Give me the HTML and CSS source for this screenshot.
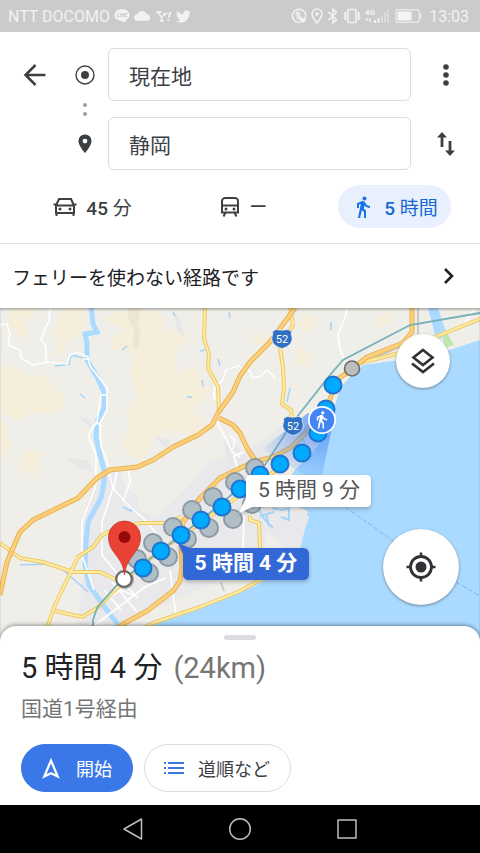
FILE: index.html
```html
<!DOCTYPE html>
<html lang="ja">
	<head>
		<meta charset="utf-8">
		<meta name="viewport" content="width=device-width, initial-scale=1">
		<title>経路 - 静岡</title>
		<link rel="stylesheet" href="styles.css">
	</head>
	<body>
		<div class="status">
			<span>NTT DOCOMO</span>
			<div class="status-icons">
				<svg width="16" height="16" viewBox="0 0 16 16"><path d="M8 1c4 0 7.500 2.500 7.500 6 0 3.500-4 6-6.500 8-.5.300-.8 0-.6-1v-1C4 13 .5 10.500.5 7 .5 3.500 4 1 8 1z" fill="#f2f2f2"/><text x="8" y="9" class="line-text">LINE</text></svg>
				<svg width="16" height="16" viewBox="0 0 24 24"><path d="M19 9.500C18.500 6.500 15.500 4.500 12 4.500c-3 0-5 1.500-6 4C2.500 9 0 11.500 0 15c0 2 1.500 4 4 4h16c2.500 0 4-2 4-4.500 0-3-2-5-5-5z" fill="#f2f2f2"/></svg>
				<svg width="18" height="16" viewBox="0 0 18 16"><path d="M2 4h6M3.500 4l4 5 4-3M9.500 5.500h4M7.500 9v3.500M5.500 13h4.500" fill="none" stroke="#f2f2f2" stroke-width="1.600"/><path d="M15 4h2.500l-2 6H14zM13.300 11.500h2V13h-2z" fill="#f2f2f2"/></svg>
				<svg width="15" height="15" viewBox="0 0 24 24"><path d="M23.953 4.570a10 10 0 01-2.825.775 4.958 4.958 0 002.163-2.723c-.951.555-2.005.959-3.127 1.184a4.920 4.920 0 00-8.384 4.482C7.690 8.095 4.067 6.130 1.640 3.162a4.822 4.822 0 00-.666 2.475c0 1.710.870 3.213 2.188 4.096a4.904 4.904 0 01-2.228-.616v.060a4.923 4.923 0 003.946 4.827 4.996 4.996 0 01-2.212.085 4.936 4.936 0 004.604 3.417 9.867 9.867 0 01-6.102 2.105c-.390 0-.779-.023-1.170-.067a13.995 13.995 0 007.557 2.209c9.053 0 13.998-7.496 13.998-13.985 0-.210 0-.420-.015-.630A9.935 9.935 0 0024 4.590z" fill="#f2f2f2"/></svg>
			</div>
			<div class="status-right">
				<svg width="16" height="16" viewBox="0 0 16 16" fill="none" stroke="#f2f2f2" stroke-width="1.500"><path d="M9 14.500A6.700 6.700 0 1 1 14.700 9"/><path d="M4.500 6.500L6.500 4.500V11M8.500 4.500V11l2-2"/><path d="M9 12.500c0-2 2-3 6-3 0 3-1 5-3.500 5-1.500 0-2.500-.8-2.500-2z" fill="#f2f2f2" stroke="none"/></svg>
				<svg width="14" height="16" viewBox="0 0 14 16" fill="none" stroke="#f2f2f2" stroke-width="1.500"><path d="M7 15C4 11 2 9 2 6a5 5 0 0 1 10 0c0 3-2 5-5 9z"/><circle cx="7" cy="6" r="1" fill="#f2f2f2"/></svg>
				<svg width="12" height="16" viewBox="0 0 12 16" fill="none" stroke="#f2f2f2" stroke-width="1.500"><path d="M1.500 4l8 7.500L6 15V1l3.500 3.500-8 7.500"/></svg>
				<svg width="20" height="16" viewBox="0 0 20 16" fill="none" stroke="#f2f2f2" stroke-width="1.600"><rect x="6" y="1.500" width="8" height="13" rx="1"/><path d="M3 3.500l1 1.500-1.500 1.500L4 8 2.500 9.500 4 11l-1 1.500M17 3.500L16 5l1.500 1.500L16 8l1.500 1.500L16 11l1 1.500"/></svg>
				<svg width="24" height="16" viewBox="0 0 24 16"><text x="0" y="7" class="net-text">4G</text><path d="M2 10v3M5 10v4" stroke="#f2f2f2" stroke-width="1.500"/><path d="M9 12h2v3H9zM12.500 10h2v5h-2z" fill="#f2f2f2"/><path d="M16 7h2v8h-2zM19 4h2v11h-2zM22 1h2v14h-2z" fill="#dcdcdc"/></svg>
				<svg class="battery" width="28" height="14" viewBox="0 0 28 14"><rect x=".8" y=".8" width="23.400" height="12.400" rx="1.500" fill="none" stroke="#e6e6e6" stroke-width="1.400"/><path d="M2.500 2.500h14v9h-14z" fill="#f4f4f4"/><path d="M25.500 4v6" stroke="#e6e6e6" stroke-width="2"/></svg>
				<span>13:03</span>
			</div>
		</div>

		<form class="directions">
			<div class="route">
				<button type="button" class="icon-btn" aria-label="戻る">
					<svg width="24" height="24" viewBox="0 0 24 24" fill="none" stroke="#3c4043" stroke-width="2.500"><path d="M22.500 12H3M12.500 2L2.500 12l10 10"/></svg>
				</button>
				<label class="marker" for="from" aria-label="出発地">
					<svg width="20" height="20" viewBox="0 0 20 20"><circle cx="10" cy="10" r="9" fill="none" stroke="#3c4043" stroke-width="1.400"/><circle cx="10" cy="10" r="4" fill="#3c4043"/></svg>
				</label>
				<input class="field" id="from" type="text" value="現在地">
				<button type="button" class="icon-btn" aria-label="メニュー">
					<svg width="24" height="24" viewBox="0 0 24 24" fill="#3c4043"><circle cx="12" cy="4" r="2.800"/><circle cx="12" cy="12" r="2.800"/><circle cx="12" cy="20" r="2.800"/></svg>
				</button>
				<div class="dots"><i></i><i></i></div>
				<label class="marker marker-to" for="to" aria-label="目的地">
					<svg width="14" height="20" viewBox="0 0 14 20"><path d="M7 .5A6.500 6.500 0 0 0 .4 7c0 4.500 6.600 12 6.600 12s6.600-7.500 6.600-12A6.500 6.500 0 0 0 7 .5zm0 9a2.400 2.400 0 1 1 0-4.800 2.400 2.400 0 0 1 0 4.800z" fill="#3c4043"/></svg>
				</label>
				<input class="field field-to" id="to" type="text" value="静岡">
				<button type="button" class="icon-btn swap" aria-label="入れ替え">
					<svg width="20" height="26" viewBox="0 0 20 26" fill="none" stroke="#3c4043" stroke-width="2.800"><path d="M6 16V4M14 10v12"/><path d="M6 1l5 5.500H1zM14 25l5-5.500H9z" fill="#3c4043" stroke="none"/></svg>
				</button>
			</div>
			<div class="modes">
				<button type="button" class="mode">
					<svg width="24" height="20" viewBox="0 0 24 20" fill="none" stroke="#3c4043" stroke-width="2"><path d="M3 8.500L6 2h12l3 6.500M3 8.500h18V16H3zM.5 7.500h3M20.500 7.500h3M3.500 16v3M20.500 16v3"/><g fill="#3c4043" stroke="none"><circle cx="7" cy="12" r="1.500"/><circle cx="17" cy="12" r="1.500"/></g></svg>
					<span><b>45</b> 分</span>
				</button>
				<button type="button" class="mode">
					<svg width="20" height="20" viewBox="0 0 20 20" fill="none" stroke="#3c4043" stroke-width="2"><path d="M2 15.500V4c0-2 2-3 3-3h10c1 0 3 1 3 3v11.500zM2 8.500h16M2 15.500h16M5.500 15.500l-2 4M14.500 15.500l2 4"/><g fill="#3c4043" stroke="none"><circle cx="6" cy="12" r="1.500"/><circle cx="14" cy="12" r="1.500"/></g></svg>
					<span class="dash">—</span>
				</button>
				<button type="button" class="mode mode-on">
					<svg width="24" height="24" viewBox="0 0 24 24"><path d="M13.500 5.500c1.100 0 2-.9 2-2s-.9-2-2-2-2 .9-2 2 .9 2 2 2zM9.800 8.900L7 23h2.100l1.800-8 2.100 2v6h2v-7.500l-2.100-2 .6-3C14.800 12 16.800 13 19 13v-2c-1.900 0-3.500-1-4.300-2.400l-1-1.600c-.4-.6-1-1-1.700-1-.3 0-.5.100-.8.100L6 8.300V13h2V9.600l1.800-.7" fill="#1a73e8"/></svg>
					<span><b>5</b> 時間</span>
				</button>
			</div>
		</form>

		<a class="notice" href="#">
			<span>フェリーを使わない経路です</span>
			<svg width="12" height="18" viewBox="0 0 12 18" fill="none" stroke="#202124" stroke-width="2.600"><path d="M2 2l7 7-7 7"/></svg>
		</a>

		<main class="map">
			<svg class="map-canvas" viewBox="0 308 480 334" preserveAspectRatio="xMidYMin slice">
				<defs>
					<radialGradient id="beam" gradientUnits="userSpaceOnUse" cx="322" cy="420" r="72">
						<stop offset="0" stop-color="#4285f4" stop-opacity=".75"/>
						<stop offset="1" stop-color="#4285f4" stop-opacity="0"/>
					</radialGradient>
					<filter id="shadow" x="-20%" y="-30%" width="140%" height="180%">
						<feDropShadow dx="0" dy="2" stdDeviation="2" flood-color="#000" flood-opacity=".25"/>
					</filter>
					<path id="shield" d="M-6-9.500Q0-8 6-9.500L9.500-7.500Q8.500-5 10-2C11 4 6 8 0 9.500-6 8-11 4-10-2-8.500-5-9.500-7.500-9.500-7.500z" fill="#2f6fc4" stroke="#fff" stroke-width=".6"/>
				</defs>

				<!-- land -->
				<path d="M0 308h480v334H0z" fill="#efeee9"/>
				<g fill="#f5eedb">
					<path d="M10 308h27l-3 8-11 4 5 10-5 10-8-9-6-6zM62 308h21l1 18-8 12-9 4-5 14-6-2 3-16-6-8zM104 318l18-8h33l7 6 4 17 14-8 10 13-14 12-1 25 20-10 6 15 10 8-10 16-9 4 14 16-13 14-18-9-21 8-5 14-8 10-13-7-6-12 8-13-3-20 11-12-8-22 5-22-10-6-12 4-2-14 14-6z"/>
					<path d="M0 366l18 2 9 9 14-3 14 12 9 10-2 13-16 4-16-1-11 10-19-10zM0 418l9 9-3 9 7 10-13 14zM26 450l18 3-7 12 1 14-9-6-12-4 4-9z"/>
					<path d="M252 336l8-4 7 9-12 4zM302 314l17 6-12 14-9-6zM298 348l13 6-3 14-14-6zM375 318l12-6 6 9-15 8z"/>
				</g>
				<path d="M127 308h14l-3 14 3 12-4 15-4-3 1-17-5-9z" fill="#ebe5d5"/>
				<path d="M75 642l9-72-4-48 16-44 22-10 8 20 16 9 34-14 36-21 40-14 24-17 14-18 16 5-10 30-20 28-18 60-30 40-90 40z" fill="#e9e9eb"/>
				<path d="M140 494l24-10 28-19 13 2-22 25-27 25-19-7z" fill="#efeee9"/>
				<path d="M172 308l9 14 4 17-7-7zM154 436l12 4 4-4-2 14zM224 440l16 8v20l-14-9zM64 458l24 2 5 12-15-4zM76 414l17 8-3 6z" fill="#e7e7e9"/>

				<!-- sea and rivers -->
				<path d="M480 340l-40 13-40 7-37 5-13 12-10 11-5 17-7 27-15 20-13 13-7 7-9 29 24 10-3 11-7 30-17 18-28 17-69 26-24 9-28 16h388z" fill="#aadaff"/>
				<path d="M250 502l30 3 10 8 14-1 5 5-4 12-5 20-16-1-8-10-10-7-2 20 2 12-30 14z" fill="#e9e9eb"/>
				<g fill="none" stroke="#a3d4fa" stroke-width="2">
					<path d="M259 510l6 10 8 8M260 516l14-4M266 514l3 12M272 508l10 2 7-2v12l-8-3"/>
					<path d="M55 366l14-2 2-9 12 3M20 565l26-1M64 571l14 12 10 9M123 507l8 4 2-3M122 350l5-4M80 394l5 4M200 351l5-1M187 397h5M202 380l1 7M218 359l2 7M173 312l2 4M229 312l1 6M331 322v8M290 388l-3 14M302 438l3 5" stroke-width="1.500"/>
				</g>
				<path d="M91 306l2 18 4 8-12 2 2 9v17l10 17 7 15v16l-7 14-1 16 4 17 4 15v12l-3 16-13 24-2 20-1 23 4 20 14 20 13 17 10 20" fill="none" stroke="#aadaff" stroke-width="5"/>
				<path d="M428 308h10l10 30h-12z" fill="#aadaff"/>
				<path d="M441 330l6 3 7 12-9 3z" fill="#bfe8b0"/>

				<!-- small roads -->
				<g fill="none" stroke="#fff" stroke-width="1.600">
					<path d="M0 325l7-1 3 10-2 11 12 5 1 8 12 7 14-3 20 2 3-9 7-3 11 5 2 9 17 22v22l-7 13 1 23 8 20"/>
					<path d="M50 308l-1 13-4 8-4 10 5 8v15M101 395h6M101 395l-4 27-9 13 8 20v30l-14 37v33l12 35M95 422l7 4M84 359h5"/>
					<path d="M108 468l5 20-11 34v33l18 22M113 488l12 14 18 16 16 18M128 465l2 17-7 20M117 470l-3 18M347 308l-2 10-7 16 2 16 4 8M240 368l9 2 4 8 8-2 6-6 9 9M240 365l-14 5-4 12-7 3-1 12 6 6-2 22 8 14 7 14 7 4M230 436l5 4-2 9M475 308l-12 18M238 470l-4-14 10-4M165 542l12 18M244 515l-1 34M170 570l6 45M80 620l40-30 16 6M104 590l17 20M112 582l25 30M128 588l10 10M95 625l50-38 20-9"/>
				</g>
				<path d="M418 308v31l-44 19M221 582l3 9M288 450l12-15 21-27" fill="none" stroke="#c9c9c9" stroke-width="2"/>

				<!-- trunk roads -->
				<g class="road-edge">
					<path d="M205 308l-1 30 5 17-1 13 10 19 1 24"/>
					<path d="M290 308l3 17-13 23 3 20 1 20-2 16 9 6 2 14"/>
					<path d="M0 543l20 15 23 4 30 10 27 0 17 8"/>
					<path d="M42 642l6-17 7-20 23-48 15-10 9-12 11-5 27-7h27l15-6"/>
					<path d="M55 611l27 6 15-9 20-20 26-24 38-28 40-27 40-29 25-16"/>
					<path d="M120 640l33-17 47-16 38-15 22-12M250 515v5l9 3 1 24 1 35"/>
					<path d="M360 363l36-9 44-19 40-16"/>
				</g>
				<g class="road-fill">
					<path d="M205 308l-1 30 5 17-1 13 10 19 1 24"/>
					<path d="M290 308l3 17-13 23 3 20 1 20-2 16 9 6 2 14"/>
					<path d="M0 543l20 15 23 4 30 10 27 0 17 8"/>
					<path d="M42 642l6-17 7-20 23-48 15-10 9-12 11-5 27-7h27l15-6"/>
					<path d="M55 611l27 6 15-9 20-20 26-24 38-28 40-27 40-29 25-16"/>
					<path d="M120 640l33-17 47-16 38-15 22-12M250 515v5l9 3 1 24 1 35"/>
					<path d="M360 363l36-9 44-19 40-16"/>
				</g>
				<g class="highway-edge">
					<path d="M0 595l7-33 13-30 13-12 45-22 19-20 13-8 27-3 16-7 20-13 25-12 14-10 6-12 15-21 7-16 10-14 20-20 25-34"/>
					<path d="M219 418l14 7 7 8 7 15 8 12"/>
					<path d="M412 308v24l-9 11-36 14-10 8-20 15-8 22-22 30-17 16-17 9-20 5-33 16-20 20-17 24-2 18 1 27-2 14-7 10-26 20-24 13-16 12"/>
				</g>
				<g class="highway-fill">
					<path d="M0 595l7-33 13-30 13-12 45-22 19-20 13-8 27-3 16-7 20-13 25-12 14-10 6-12 15-21 7-16 10-14 20-20 25-34"/>
					<path d="M219 418l14 7 7 8 7 15 8 12"/>
					<path d="M412 308v24l-9 11-36 14-10 8-20 15-8 22-22 30-17 16-17 9-20 5-33 16-20 20-17 24-2 18 1 27-2 14-7 10-26 20-24 13-16 12"/>
				</g>
				<path d="M480 313l-70 12-67 35-13 15-37 47-28 43-44 39-42 33-40 30-22 18-20 23-4 12v22" fill="none" stroke="#75b1b6" stroke-width="1.800"/>
				<path d="M345 507l50 35M456 582l24 14" fill="none" stroke="#85b5e5" stroke-dasharray="5 2"/>

				<use href="#shield" x="282" y="339"/>
				<text x="282" y="343" class="shield-text">52</text>
				<path d="M322 420l-14-7-46 36 58 36 12-57z" fill="url(#beam)"/>
				<use href="#shield" x="293" y="426"/>
				<text x="293" y="430" class="shield-text">52</text>

				<!-- alternative route -->
				<g class="stop-alt">
					<circle cx="255" cy="468" r="9"/><circle cx="235" cy="482" r="9"/><circle cx="213" cy="497" r="9"/><circle cx="192" cy="510" r="9"/>
					<circle cx="173" cy="527" r="9"/><circle cx="153" cy="543" r="9"/><circle cx="137" cy="559" r="9"/>
					<circle cx="252" cy="504" r="9"/><circle cx="233" cy="519" r="9"/><circle cx="209" cy="528" r="9"/><circle cx="187" cy="539" r="9"/>
					<circle cx="168" cy="557" r="9"/><circle cx="149" cy="573" r="9"/>
				</g>
				<!-- walking route -->
				<g class="stop">
					<circle cx="333" cy="385" r="8.500"/><circle cx="326" cy="409" r="8.500"/><circle cx="318" cy="433" r="8.500"/><circle cx="302" cy="453" r="8.500"/>
					<circle cx="280" cy="464" r="8.500"/><circle cx="260" cy="475" r="8.500"/><circle cx="240" cy="489" r="8.500"/><circle cx="222" cy="507" r="8.500"/>
					<circle cx="201" cy="520" r="8.500"/><circle cx="181" cy="535" r="8.500"/><circle cx="161" cy="551" r="8.500"/><circle cx="143" cy="568" r="8.500"/>
				</g>
				<circle cx="352" cy="368.500" r="7.500" fill="#bdbdbd" stroke="#6b6b6b" stroke-width="1.600"/>
				<circle cx="125" cy="580" r="9" fill="#777" opacity=".5"/>
				<circle cx="124" cy="579" r="7.800" fill="#fff" stroke="#686868" stroke-width="2.200"/>
				<path d="M124.500 575c-1-10-4-14-10-22-4-5-6-10-6-16a16 16 0 0 1 32 0c0 6-2 11-6 16-6 8-9 12-10 22z" fill="#ea4335" stroke="#c5332a" stroke-width=".8"/>
				<circle cx="124.500" cy="537" r="6" fill="#960a0a"/>

				<circle cx="322" cy="420" r="14" fill="#fff"/>
				<circle cx="322" cy="420" r="12.300" fill="#4285f4"/>
				<g transform="translate(312 410) scale(.8)"><path d="M13.500 5.500c1.100 0 2-.9 2-2s-.9-2-2-2-2 .9-2 2 .9 2 2 2zM9.800 8.900L7 23h2.100l1.800-8 2.100 2v6h2v-7.500l-2.100-2 .6-3C14.800 12 16.800 13 19 13v-2c-1.900 0-3.500-1-4.300-2.400l-1-1.600c-.4-.6-1-1-1.700-1-.3 0-.5.100-.8.100L6 8.300V13h2V9.600l1.800-.7" fill="#fff"/></g>

				<!-- time labels -->
				<path d="M251 475h115q5 0 5 5v22q0 5-5 5H252l-13 6 7-15v-18q0-5 5-5z" fill="#fff" filter="url(#shadow)"/>
				<text x="309" y="497" class="time">5 時間 9 分</text>
				<path d="M178 543l12 5h113q6 0 6 6v20q0 6-6 6H189q-6 0-6-6v-20z" fill="#3367d6" filter="url(#shadow)"/>
				<text x="246" y="570" class="time time-on">5 時間 4 分</text>
			</svg>
			<button type="button" class="fab fab-layers" aria-label="地図の種類">
				<svg width="26" height="28" viewBox="0 0 26 28" fill="none" stroke="#303236" stroke-width="2.600"><path d="M13 3l9.500 7.500L13 18l-9.500-7.500zM2 16.500l11 8.500 11-8.500"/></svg>
			</button>
			<button type="button" class="fab fab-locate" aria-label="現在地を表示">
				<svg width="30" height="30" viewBox="0 0 30 30" fill="none" stroke="#303236"><circle cx="15" cy="15" r="10.500" stroke-width="2.800"/><circle cx="15" cy="15" r="5.500" fill="#303236" stroke="none"/><path d="M15 .5V5M15 25v4.500M.5 15H5M25 15h4.500" stroke-width="2.500"/></svg>
			</button>
		</main>

		<section class="sheet">
			<div class="handle"></div>
			<h1 class="total">5 時間 4 分 <span class="distance">(24km)</span></h1>
			<p class="via">国道1号経由</p>
			<div class="actions">
				<button type="button" class="action action-start">
					<svg width="18" height="22" viewBox="0 0 18 22" fill="none" stroke="#fff" stroke-width="2.200"><path d="M9 3.500l6.700 16L9 16.200l-6.700 3.300z"/></svg>
					<span>開始</span>
				</button>
				<button type="button" class="action">
					<svg width="22" height="14" viewBox="0 0 22 14" stroke="#3b78e7" stroke-width="2.200"><path d="M5 2h16M5 7h16M5 12h16M1 2h2M1 7h2M1 12h2"/></svg>
					<span>道順など</span>
				</button>
			</div>
		</section>

		<nav class="navbar">
			<button type="button" aria-label="戻る"><svg width="24" height="24" viewBox="0 0 24 24"><path d="M20.500 2v20L3 12z"/></svg></button>
			<button type="button" aria-label="ホーム"><svg width="24" height="24" viewBox="0 0 24 24"><circle cx="12" cy="12" r="10.300"/></svg></button>
			<button type="button" aria-label="履歴"><svg width="24" height="24" viewBox="0 0 24 24"><path d="M3 3h18v18H3z"/></svg></button>
		</nav>
	</body>
</html>
```
FILE: styles.css
```css
* {
	padding: 0;
	margin: 0;
	box-sizing: border-box;
}

body {
	display: flex;
	flex-direction: column;
	min-height: 100vh;
	background-color: #fff;
	color: #3c4043;
	font-family: Roboto, "Noto Sans CJK JP", sans-serif;
}

button {
	border: none;
	background: none;
	color: inherit;
	font: inherit;
}

svg {
	display: block;
	flex-shrink: 0;
}

/* status bar */
.status {
	display: flex;
	align-items: center;
	gap: 4px;
	height: 32px;
	padding: 0 11px 0 8px;
	background-color: #cbcbcb;
	color: #f2f2f2;
	font-size: 16px;
}

.status-icons,
.status-right {
	display: flex;
	align-items: center;
	gap: 4px;
}

.status-right {
	gap: 3px;
	margin-left: auto;
}

.battery {
	margin: 0 3px;
}

.line-text {
	fill: #cbcbcb;
	font-size: 5px;
	font-weight: bold;
	text-anchor: middle;
}

.net-text {
	fill: #f2f2f2;
	font-size: 8px;
	font-weight: bold;
}

/* directions */
.directions {
	padding: 16px 0 15px;
	border-bottom: 1px solid #e4e4e4;
}

.route {
	display: grid;
	grid-template-columns: 70px 30px 1fr 69px;
	grid-template-rows: 53px 16px 53px;
	align-items: center;
}

.icon-btn,
.marker {
	display: flex;
	align-items: center;
	justify-content: center;
	height: 53px;
}

.field {
	min-width: 0;
	height: 53px;
	margin-left: 8px;
	padding: 0 20px;
	border: 1px solid #dadce0;
	border-radius: 6px;
	background-color: #fff;
	color: #3c4043;
	font-family: inherit;
	font-size: 21px;
}

.dots {
	grid-column: 2;
	grid-row: 2;
	display: flex;
	flex-direction: column;
	align-items: center;
	gap: 5px;
}

.dots i {
	width: 4px;
	height: 4px;
	border-radius: 50%;
	background-color: #9aa0a6;
}

.marker-to {
	grid-column: 2;
	grid-row: 3;
}

.field-to {
	grid-column: 3;
	grid-row: 3;
}

.swap {
	grid-column: 4;
	grid-row: 3;
}

.modes {
	display: grid;
	grid-template-columns: repeat(3, 1fr);
	justify-items: center;
	padding: 15px 10px 0 17px;
}

.mode {
	display: flex;
	align-items: center;
	justify-content: center;
	gap: 9px;
	height: 43px;
	padding: 0 13px;
	border-radius: 22px;
	font-size: 19px;
}

.mode b {
	font-weight: 500;
}

.mode-on {
	background-color: #e8f0fe;
	color: #1967d2;
}

.dash {
	font-size: 22px;
}

.notice {
	display: flex;
	align-items: center;
	justify-content: space-between;
	height: 64px;
	padding: 0 25px 0 12px;
	color: #202124;
	font-size: 19px;
	text-decoration: none;
}

/* map */
.map {
	position: relative;
	flex: 1;
	min-height: 320px;
	overflow: hidden;
	box-shadow: inset 0 2px 2px rgba(0, 0, 0, .25);
}

.map-canvas {
	position: absolute;
	z-index: -1;
	width: 100%;
	height: 100%;
}

.road-edge,
.road-fill,
.highway-edge,
.highway-fill {
	fill: none;
	stroke-linejoin: round;
}

.road-edge {
	stroke: #ecc967;
	stroke-width: 4px;
}

.road-fill {
	stroke: #ffeba3;
	stroke-width: 2px;
}

.highway-edge {
	stroke: #e8b356;
	stroke-width: 5px;
}

.highway-fill {
	stroke: #fcd07a;
	stroke-width: 3px;
}

.shield-text {
	fill: #fff;
	font-size: 11px;
	text-anchor: middle;
}

.stop {
	fill: #00aaff;
	stroke: #2273d0;
	stroke-width: 2px;
}

.stop-alt {
	fill: #b0bec5;
	stroke: #8d9aa5;
	stroke-width: 2px;
}

.time {
	fill: #555;
	font-size: 21px;
	text-anchor: middle;
}

.time-on {
	fill: #fff;
	font-weight: bold;
}

.fab {
	position: absolute;
	display: flex;
	align-items: center;
	justify-content: center;
	border-radius: 50%;
	background-color: #fff;
	box-shadow: 0 1px 3px rgba(0, 0, 0, .4);
}

.fab-layers {
	top: 26px;
	right: 30px;
	width: 54px;
	height: 54px;
}

.fab-locate {
	right: 21px;
	bottom: 37px;
	width: 76px;
	height: 76px;
}

/* bottom sheet */
.sheet {
	position: relative;
	margin-top: -16px;
	padding: 9px 21px 13px;
	border-radius: 16px 16px 0 0;
	background-color: #fff;
	box-shadow: 0 -1px 4px rgba(0, 0, 0, .4);
}

.handle {
	width: 32px;
	height: 5px;
	margin: 0 auto;
	border-radius: 3px;
	background-color: #dadce0;
}

.total {
	margin-top: 8px;
	color: #202124;
	font-size: 29px;
	font-weight: normal;
	line-height: 40px;
}

.distance {
	margin-left: 4px;
	color: #757575;
}

.via {
	margin-top: 6px;
	color: #757575;
	font-size: 21px;
	line-height: 30px;
}

.actions {
	display: flex;
	gap: 11px;
	margin-top: 20px;
}

.action {
	display: flex;
	align-items: center;
	gap: 13px;
	height: 48px;
	padding: 0 20px 0 18px;
	border: 1px solid #dadce0;
	border-radius: 24px;
	font-size: 18px;
}

.action-start {
	gap: 16px;
	padding-left: 20px;
	border-color: #3b78e7;
	background-color: #3b78e7;
	color: #fff;
}

/* system buttons */
.navbar {
	display: flex;
	justify-content: center;
	gap: 83px;
	height: 48px;
	background-color: #000;
}

.navbar svg {
	fill: none;
	stroke: #bdbdbd;
	stroke-width: 1.5px;
	stroke-linejoin: round;
}
```
